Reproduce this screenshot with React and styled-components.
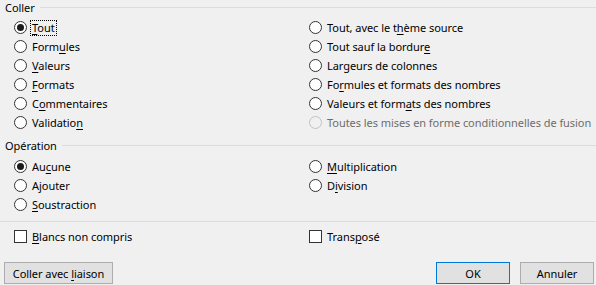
import React from "react";
import styled, { createGlobalStyle, css } from "styled-components";

const GlobalStyle = createGlobalStyle`
  html, body {
    margin: 0;
    padding: 0;
    background: #f0f0f0;
  }
  body {
    font-family: "Noto Sans", "Open Sans", sans-serif;
    font-size: 11px;
    letter-spacing: -0.05px;
    color: #000;
  }
`;

const Dialog = styled.div`
  width: 596px;
  height: 285px;
  box-sizing: border-box;
  background: #f0f0f0;
  display: flex;
  flex-direction: column;
  overflow: hidden;
`;

const GroupTitle = styled.div`
  display: flex;
  align-items: center;
  gap: 5px;
  height: 15px;
  line-height: 15px;
  padding-left: 5px;
  margin-top: ${({ $top }) => $top}px;

  &::after {
    content: "";
    flex: 1;
    height: 1px;
    background: #dcdcdc;
  }
`;

const OptionGrid = styled.div`
  display: grid;
  grid-template-columns: 295px 1fr;
  grid-auto-flow: column;
  grid-template-rows: repeat(${({ $rows }) => $rows}, 19px);
  padding-left: 14px;
  margin-top: ${({ $top }) => $top}px;
`;

const Option = styled.label`
  display: flex;
  align-items: center;
  gap: 5px;
  white-space: nowrap;
  color: ${({ $disabled }) => ($disabled ? "#6d6d6d" : "#000")};
`;

const Radio = styled.span`
  position: relative;
  width: 13px;
  height: 13px;
  box-sizing: border-box;
  border-radius: 50%;
  border: 1px solid ${({ $disabled }) => ($disabled ? "#c2c2c2" : "#333")};
  background: ${({ $disabled }) => ($disabled ? "#f0f0f0" : "#fff")};
  flex: none;

  ${({ $checked }) =>
    $checked &&
    css`
      &::after {
        content: "";
        position: absolute;
        left: 2px;
        top: 2px;
        width: 7px;
        height: 7px;
        border-radius: 50%;
        background: #1b1b1b;
      }
    `}
`;

const Checkbox = styled.span`
  width: 13px;
  height: 13px;
  box-sizing: border-box;
  border: 1px solid #333;
  background: #fff;
  flex: none;
`;

const Text = styled.span`
  line-height: 14px;
  ${({ $focus }) =>
    $focus &&
    css`
      outline: 1px dotted #000;
      outline-offset: 0;
      padding: 0 1px;
      margin-left: -1px;
    `}
`;

const Key = styled.span`
  text-decoration: underline;
  text-underline-offset: 2px;
`;

const Separator = styled.div`
  height: 1px;
  background: #dcdcdc;
  margin-top: 7px;
`;

const CheckRow = styled.div`
  display: grid;
  grid-template-columns: 295px 1fr;
  height: 19px;
  padding-left: 14px;
  margin-top: 5px;
`;

const ButtonBar = styled.div`
  display: flex;
  align-items: center;
  padding: 0 2px 0 4px;
  margin-top: 16px;
  gap: 10px;
`;

const Spacer = styled.div`
  flex: 1;
`;

const Button = styled.button`
  height: 22px;
  width: ${({ $w }) => $w}px;
  box-sizing: border-box;
  padding: 0;
  font-family: inherit;
  font-size: inherit;
  letter-spacing: inherit;
  white-space: nowrap;
  color: #000;
  background: #e1e1e1;
  border: 1px solid ${({ $primary }) => ($primary ? "#0078d7" : "#adadad")};
  border-radius: 0;
`;

// libellé avec la lettre d'accès soulignée
const label = (text, k) => {
  if (k < 0) return text;
  return (
    <>
      {text.slice(0, k)}
      <Key>{text[k]}</Key>
      {text.slice(k + 1)}
    </>
  );
};

const pasteOptions = [
  ["Tout", 0, true, false, true],
  ["Formules", 4],
  ["Valeurs", 0],
  ["Formats", 0],
  ["Commentaires", 1],
  ["Validation", 9],
  ["Tout, avec le thème source", 15],
  ["Tout sauf la bordure", 19],
  ["Largeurs de colonnes", 3],
  ["Formules et formats des nombres", 2],
  ["Valeurs et formats des nombres", 15],
  ["Toutes les mises en forme conditionnelles de fusion", -1, false, true],
];

const opOptions = [
  ["Aucune", 2, true],
  ["Ajouter", 1],
  ["Soustraction", 0],
  ["Multiplication", 0],
  ["Division", 1],
];

const RadioOption = ({ item }) => {
  const [text, k, checked, disabled, focus] = item;
  return (
    <Option $disabled={disabled}>
      <Radio $checked={checked} $disabled={disabled} />
      <Text $focus={focus}>{label(text, k)}</Text>
    </Option>
  );
};

export default function App() {
  return (
    <>
      <GlobalStyle />
      <Dialog>
        <GroupTitle $top={0}>Coller</GroupTitle>
        <OptionGrid $rows={6} $top={3}>
          {pasteOptions.map((o) => (
            <RadioOption key={o[0]} item={o} />
          ))}
        </OptionGrid>

        <GroupTitle $top={6}>Opération</GroupTitle>
        <OptionGrid $rows={3} $top={4}>
          {opOptions.map((o) => (
            <RadioOption key={o[0]} item={o} />
          ))}
        </OptionGrid>

        <Separator />

        <CheckRow>
          <Option>
            <Checkbox />
            <Text>{label("Blancs non compris", 0)}</Text>
          </Option>
          <Option>
            <Checkbox />
            <Text>{label("Transposé", 5)}</Text>
          </Option>
        </CheckRow>

        <ButtonBar>
          <Button $w={109}>{label("Coller avec liaison", 12)}</Button>
          <Spacer />
          <Button $w={74} $primary>
            OK
          </Button>
          <Button $w={74}>Annuler</Button>
        </ButtonBar>
      </Dialog>
    </>
  );
}
